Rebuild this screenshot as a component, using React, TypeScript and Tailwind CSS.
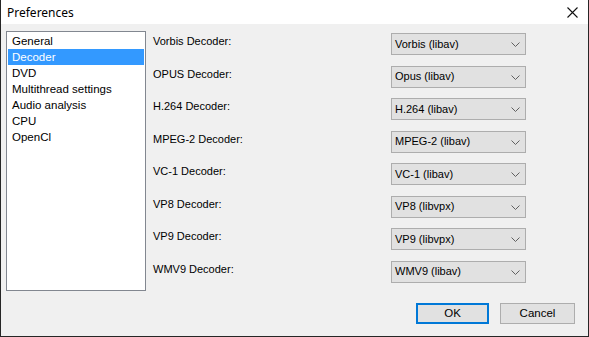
import React from "react";

const items = ["General", "Decoder", "DVD", "Multithread settings", "Audio analysis", "CPU", "OpenCl"];
const rows: [string, string][] = [
  ["Vorbis Decoder:", "Vorbis (libav)"],
  ["OPUS Decoder:", "Opus (libav)"],
  ["H.264 Decoder:", "H.264 (libav)"],
  ["MPEG-2 Decoder:", "MPEG-2 (libav)"],
  ["VC-1 Decoder:", "VC-1 (libav)"],
  ["VP8 Decoder:", "VP8 (libvpx)"],
  ["VP9 Decoder:", "VP9 (libvpx)"],
  ["WMV9 Decoder:", "WMV9 (libav)"],
];

function Chevron() {
  return (
    <svg width="9" height="5" viewBox="0 0 9 5" className="shrink-0 mt-[1px]">
      <path d="M0.5 0.5 L4.5 4.5 L8.5 0.5" fill="none" stroke="#606060" strokeWidth="1" />
    </svg>
  );
}

export default function App() {
  const font = { fontFamily: '"Liberation Sans", Arial, sans-serif' };
  return (
    <div
      className="w-[589px] h-[337px] flex flex-col border-l border-r border-b border-[#262626] bg-[#f0f0f0] text-black overflow-hidden"
      style={font}
    >
      <div className="h-[24px] shrink-0 bg-white flex items-center justify-between pl-[6px] pr-[10px]">
        <span className="text-[12px] leading-none pt-[1px]" style={{ fontFamily: '"Noto Sans", "Open Sans", sans-serif' }}>
          Preferences
        </span>
        <svg width="11" height="11" viewBox="0 0 11 11">
          <path d="M0.5 0.5 L10.5 10.5 M10.5 0.5 L0.5 10.5" stroke="#111" strokeWidth="1.1" />
        </svg>
      </div>
      <div className="flex-1 flex flex-col pt-[7px] pl-[5px] pr-[12px]">
        <div className="flex">
          <div className="w-[140px] h-[260px] shrink-0 border border-[#828790] bg-white pt-[1px] px-[1px]">
            {items.map((it) => (
              <div
                key={it}
                className={
                  "h-[16px] leading-[16px] text-[11.5px] pl-[4px] " +
                  (it === "Decoder" ? "bg-[#3399ff] text-white" : "text-black")
                }
              >
                {it}
              </div>
            ))}
          </div>
          <div className="flex flex-col ml-[7px] pt-[0px]">
            {rows.map(([label, value]) => (
              <div key={label} className="h-[32.5px] flex items-start">
                <div className="w-[238px] mt-[3px] text-[11px] leading-[14px]">{label}</div>
                <div className="w-[135px] h-[22px] mt-[2px] bg-[#e1e1e1] border border-[#adadad] flex items-center justify-between pl-[3px] pr-[5px]">
                  <span className="text-[11px] leading-none">{value}</span>
                  <Chevron />
                </div>
              </div>
            ))}
          </div>
        </div>
        <div className="flex justify-end gap-[11px] mt-[12px] pr-[1px]">
          <div className="w-[73px] h-[21px] bg-[#e1e1e1] border-2 border-[#0078d7] flex items-center justify-center text-[11.5px]">
            OK
          </div>
          <div className="w-[75px] h-[21px] bg-[#e1e1e1] border border-[#adadad] flex items-center justify-center text-[11.5px]">
            Cancel
          </div>
        </div>
      </div>
    </div>
  );
}
